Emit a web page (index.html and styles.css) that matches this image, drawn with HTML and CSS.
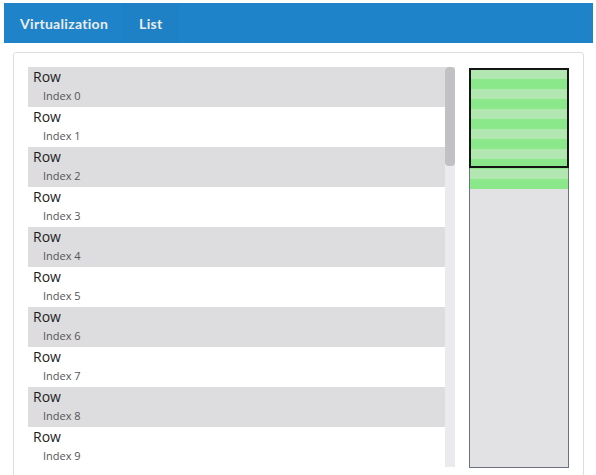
FILE: index.html
```html
<!DOCTYPE html>
<html>
<head>
<meta charset="utf-8">
<link rel="stylesheet" href="styles.css">
</head>
<body>
<nav class="navbar">
  <span class="brand">Virtualization</span>
  <span class="tab active">List</span>
</nav>
<main class="page">
  <section class="card">
    <div class="list">
      <div class="rows">
        <div class="row even"><div class="title">Row</div><div class="sub">Index 0</div></div>
        <div class="row"><div class="title">Row</div><div class="sub">Index 1</div></div>
        <div class="row even"><div class="title">Row</div><div class="sub">Index 2</div></div>
        <div class="row"><div class="title">Row</div><div class="sub">Index 3</div></div>
        <div class="row even"><div class="title">Row</div><div class="sub">Index 4</div></div>
        <div class="row"><div class="title">Row</div><div class="sub">Index 5</div></div>
        <div class="row even"><div class="title">Row</div><div class="sub">Index 6</div></div>
        <div class="row"><div class="title">Row</div><div class="sub">Index 7</div></div>
        <div class="row even"><div class="title">Row</div><div class="sub">Index 8</div></div>
        <div class="row"><div class="title">Row</div><div class="sub">Index 9</div></div>
      </div>
      <div class="scrollbar"><div class="thumb"></div></div>
    </div>
    <div class="minimap">
      <div class="stripes">
        <div class="stripe light"></div><div class="stripe dark"></div>
        <div class="stripe light"></div><div class="stripe dark"></div>
        <div class="stripe light"></div><div class="stripe dark"></div>
        <div class="stripe light"></div><div class="stripe dark"></div>
        <div class="stripe light"></div><div class="stripe dark"></div>
        <div class="stripe light"></div><div class="stripe dark"></div>
      </div>
      <div class="viewport"></div>
    </div>
  </section>
</main>
</body>
</html>
```
FILE: styles.css
```css
* { box-sizing: border-box; }
html, body { background: #fff; }
body {
  margin: 3px 3px 0 4px;
  font-family: "Open Sans", "Liberation Sans", sans-serif;
  overflow: hidden;
}
.navbar {
  display: flex;
  align-items: stretch;
  height: 40px;
  background: #1f83c9;
  padding-left: 16px;
}
.brand {
  display: flex;
  align-items: center;
  font-family: Lato, "Open Sans", sans-serif;
  font-weight: 700;
  font-size: 14px;
  color: #ececec;
  margin-right: 14px;
  letter-spacing: 0.3px;
}
.tab {
  display: flex;
  align-items: center;
  padding: 0 17px;
  font-family: Lato, "Open Sans", sans-serif;
  font-weight: 700;
  font-size: 14px;
  color: #ececec;
  letter-spacing: 0.3px;
}
.tab.active { background: #1e81c6; }
.page { padding: 9px 9px 0 9px; }
.card {
  display: flex;
  align-items: flex-start;
  gap: 14px;
  border: 1px solid #dddddd;
  border-radius: 3px;
  padding: 14px;
  height: 500px;
}
.list {
  flex: 1;
  display: flex;
  height: 400px;
}
.rows { flex: 1; }
.row {
  height: 40px;
  padding-left: 5px;
  background: #fff;
}
.row.even { background: #dddcde; }
.title {
  font-size: 14px;
  line-height: 19px;
  color: #1c1c1c;
}
.sub {
  font-size: 11px;
  line-height: 15px;
  margin-top: 2px;
  padding-left: 10px;
  color: #555;
}
.scrollbar {
  width: 10px;
  background: #ebeaec;
}
.thumb {
  height: 99px;
  background: #c1c1c3;
  border-radius: 4px;
}
.minimap {
  position: relative;
  width: 100px;
  height: 400px;
  margin-top: 1px;
  border: 1px solid #6d7082;
  background: #e2e1e4;
}
.stripe { height: 10px; }
.stripe.light { background: #b2e7b2; }
.stripe.dark { background: #8ae88a; }
.viewport {
  position: absolute;
  top: -1px;
  left: -1px;
  width: 100px;
  height: 100px;
  border: 2px solid #151515;
}
```
